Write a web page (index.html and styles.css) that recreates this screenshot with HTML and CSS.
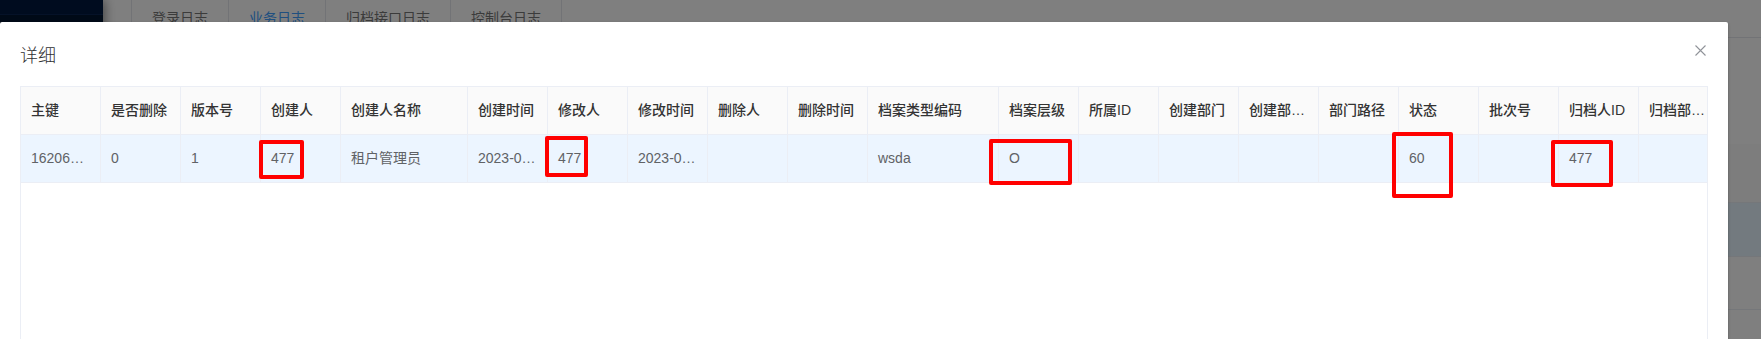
FILE: index.html
```html
<!DOCTYPE html>
<html lang="zh-CN">
<head>
    <meta charset="UTF-8">
    <meta name="viewport" content="width=device-width, initial-scale=1.0">
    <title>业务日志</title>
    <link rel="stylesheet" href="styles.css">
</head>
<body>
    <div class="app">
        <aside class="sidebar">
            <div class="sidebar-logo"></div>
        </aside>
        <main class="main">
            <div class="tabs">
                <span class="tab">登录日志</span>
                <span class="tab active">业务日志</span>
                <span class="tab">归档接口日志</span>
                <span class="tab">控制台日志</span>
            </div>
            <div class="page-list">
                <div class="page-row page-head"></div>
                <div class="page-row page-current"></div>
                <div class="page-row"></div>
                <div class="page-row"></div>
            </div>
        </main>
    </div>

    <div class="mask"></div>

    <div class="dialog">
        <div class="dialog-header">
            <span class="dialog-title">详细</span>
            <button class="dialog-close" aria-label="关闭">
                <svg width="11" height="11" viewBox="0 0 11 11">
                    <path d="M0.5 0.5 L10.5 10.5 M10.5 0.5 L0.5 10.5" stroke="#909399" stroke-width="1.1" fill="none"/>
                </svg>
            </button>
        </div>
        <div class="dialog-body">
            <div class="table-wrap">
                <table class="detail-table">
                    <colgroup>
                        <col class="w80"><col class="w80"><col class="w80"><col class="w80">
                        <col class="w127"><col class="w80"><col class="w80"><col class="w80">
                        <col class="w80"><col class="w80"><col class="w131"><col class="w80">
                        <col class="w80"><col class="w80"><col class="w80"><col class="w80">
                        <col class="w80"><col class="w80"><col class="w80"><col class="w80">
                    </colgroup>
                    <thead>
                        <tr>
                            <th><div class="cell">主键</div></th>
                            <th><div class="cell">是否删除</div></th>
                            <th><div class="cell">版本号</div></th>
                            <th><div class="cell">创建人</div></th>
                            <th><div class="cell">创建人名称</div></th>
                            <th><div class="cell">创建时间</div></th>
                            <th><div class="cell">修改人</div></th>
                            <th><div class="cell">修改时间</div></th>
                            <th><div class="cell">删除人</div></th>
                            <th><div class="cell">删除时间</div></th>
                            <th><div class="cell">档案类型编码</div></th>
                            <th><div class="cell">档案层级</div></th>
                            <th><div class="cell">所属ID</div></th>
                            <th><div class="cell">创建部门</div></th>
                            <th><div class="cell">创建部门名称</div></th>
                            <th><div class="cell">部门路径</div></th>
                            <th><div class="cell">状态</div></th>
                            <th><div class="cell">批次号</div></th>
                            <th><div class="cell">归档人ID</div></th>
                            <th><div class="cell">归档部门名称</div></th>
                        </tr>
                    </thead>
                    <tbody>
                        <tr class="current-row">
                            <td><div class="cell">1620613386229784578</div></td>
                            <td><div class="cell">0</div></td>
                            <td><div class="cell">1</div></td>
                            <td><div class="cell">477</div></td>
                            <td><div class="cell">租户管理员</div></td>
                            <td><div class="cell">2023-02-01 10:12:36</div></td>
                            <td><div class="cell">477</div></td>
                            <td><div class="cell">2023-02-01 10:12:36</div></td>
                            <td><div class="cell"></div></td>
                            <td><div class="cell"></div></td>
                            <td><div class="cell">wsda</div></td>
                            <td><div class="cell">O</div></td>
                            <td><div class="cell"></div></td>
                            <td><div class="cell"></div></td>
                            <td><div class="cell"></div></td>
                            <td><div class="cell"></div></td>
                            <td><div class="cell">60</div></td>
                            <td><div class="cell"></div></td>
                            <td><div class="cell">477</div></td>
                            <td><div class="cell"></div></td>
                        </tr>
                    </tbody>
                </table>

                <!-- red marks drawn over the screenshot -->
                <span class="mark mark-creator"></span>
                <span class="mark mark-updater"></span>
                <span class="mark mark-level"></span>
                <span class="mark mark-status"></span>
                <span class="mark mark-archiver"></span>
            </div>
        </div>
    </div>
</body>
</html>
```

FILE: styles.css
```css
* {
    box-sizing: border-box;
    margin: 0;
    padding: 0;
}

body {
    font-family: "Liberation Sans", "Noto Sans CJK SC", sans-serif;
    font-size: 14px;
    background: #fff;
    width: 1761px;
    height: 339px;
    overflow: hidden;
    position: relative;
}

/* page behind the dialog */
.app {
    display: flex;
    height: 339px;
}

.sidebar {
    width: 103px;
    flex-shrink: 0;
    background: #00142f;
    box-shadow: 2px 0 10px rgba(0, 0, 0, 0.45);
    position: relative;
    z-index: 1;
}

.sidebar-logo {
    height: 15px;
    background: #00183e;
    border-bottom: 1px solid #0a2450;
}

.main {
    flex: 1;
    display: flex;
    flex-direction: column;
}

.tabs {
    height: 38px;
    display: flex;
    padding-left: 28px;
    border-bottom: 1px solid #e4e7ed;
}

.tab {
    padding: 0 20px;
    line-height: 37px;
    color: #777;
    border-left: 1px solid #e4e7ed;
    white-space: nowrap;
}

.tab:last-child {
    border-right: 1px solid #e4e7ed;
}

.tab.active {
    color: #409eff;
}

.page-list {
    margin-top: 106px;
}

.page-row {
    height: 53px;
    border-bottom: 1px solid #ebeef5;
}

.page-head {
    height: 59px;
    background: #fbfbfb;
}

.page-current {
    height: 54px;
    background: #e6f4ff;
}

.mask {
    position: absolute;
    inset: 0;
    z-index: 10;
    background: rgba(0, 0, 0, 0.5);
}

/* dialog */
.dialog {
    position: absolute;
    left: 0;
    top: 22px;
    z-index: 11;
    width: 1728px;
    height: 420px;
    background: #fff;
    border-radius: 2px;
    box-shadow: 0 1px 3px rgba(0, 0, 0, 0.3);
}

.dialog-header {
    padding: 20px 20px 10px;
    position: relative;
}

.dialog-title {
    display: block;
    font-size: 18px;
    line-height: 24px;
    color: #303133;
    font-family: "Noto Sans CJK SC", sans-serif;
    font-weight: 300;
}

.dialog-close {
    position: absolute;
    top: 20px;
    right: 20px;
    width: 16px;
    height: 16px;
    border: none;
    background: none;
    display: flex;
    align-items: center;
    justify-content: center;
    cursor: pointer;
}

.dialog-body {
    padding: 10px 20px 0;
}

.table-wrap {
    position: relative;
    height: 320px;
    border: 1px solid #ebeef5;
    overflow: hidden;
}

.detail-table {
    table-layout: fixed;
    width: 1698px;
    border-collapse: separate;
    border-spacing: 0;
}

.w80 { width: 80px; }
.w127 { width: 127px; }
.w131 { width: 131px; }

.detail-table th,
.detail-table td {
    padding: 12px 0;
    text-align: left;
    border-right: 1px solid #ebeef5;
    border-bottom: 1px solid #ebeef5;
}

.detail-table th {
    background: #fafafa;
    color: #333;
    font-weight: 500;
}

.detail-table td {
    color: #606266;
}

.current-row td {
    background: #ecf5ff;
}

.cell {
    padding: 0 10px;
    line-height: 23px;
    white-space: nowrap;
    overflow: hidden;
    text-overflow: ellipsis;
}

/* annotation boxes */
.mark {
    position: absolute;
    border: 4px solid #ff0000;
    border-radius: 2px;
}

.mark-creator { left: 238px; top: 53px; width: 45px; height: 39px; }
.mark-updater { left: 524px; top: 49px; width: 43px; height: 41px; }
.mark-level { left: 968px; top: 52px; width: 83px; height: 46px; }
.mark-status { left: 1371px; top: 45px; width: 61px; height: 66px; }
.mark-archiver { left: 1530px; top: 53px; width: 62px; height: 47px; }
```
